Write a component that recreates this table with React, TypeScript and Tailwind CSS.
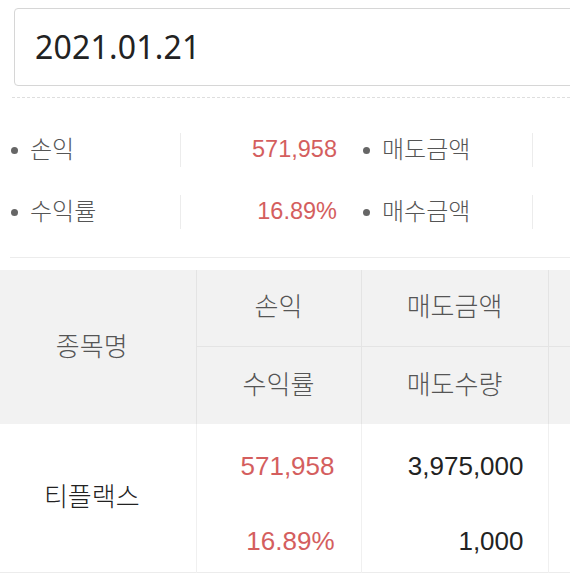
import React from "react"

const kr = "font-['Liberation_Sans','Noto_Sans_CJK_KR',sans-serif]"

interface SummaryItem {
  label: string
  value: string
  red?: boolean
}

const summaryRows: SummaryItem[][] = [
  [
    { label: "손익", value: "571,958", red: true },
    { label: "매도금액", value: "" },
  ],
  [
    { label: "수익률", value: "16.89%", red: true },
    { label: "매수금액", value: "" },
  ],
]

function SummaryCell({ item }: { item: SummaryItem }) {
  return (
    <div className="flex items-center w-[352px] shrink-0">
      <div className="flex items-center w-[180px] shrink-0 pl-[11px] text-[24px] font-light text-[#555]">
        <span className="w-[7px] h-[7px] rounded-full bg-[#666] mr-[12px]" />
        {item.label}
      </div>
      <div className="w-px h-[34px] bg-[#ececec]" />
      <div
        className={`flex-1 text-right pr-[15px] text-[23.5px] ${
          item.red ? "text-[#d45e5e]" : "text-[#222]"
        }`}
      >
        {item.value}
      </div>
    </div>
  )
}

export default function App() {
  return (
    <div className={`w-[570px] h-[575px] overflow-hidden bg-white ${kr}`}>
      <div className="w-[760px] pt-[8px]">
        <div className="ml-[14px] h-[78px] border border-[#d6d6d6] rounded-[4px] flex items-center pl-[20px]">
          <span className="font-['Noto_Sans',sans-serif] text-[32px] text-[#222] tracking-[0.2px]">
            2021.01.21
          </span>
        </div>

        <div className="ml-[12px] mt-[11px] border-t border-dashed border-[#dedede]" />

        <div className="pt-[21px] pb-[14px]">
          {summaryRows.map((row, i) => (
            <div key={i} className="flex h-[62px]">
              {row.map((item) => (
                <SummaryCell key={item.label} item={item} />
              ))}
            </div>
          ))}
        </div>

        <div className="ml-[10px] border-t border-[#ececec]" />

        <table className="mt-[12px] border-collapse table-fixed w-[760px]">
          <colgroup>
            <col className="w-[196px]" />
            <col className="w-[165px]" />
            <col className="w-[187px]" />
            <col />
          </colgroup>
          <thead className="bg-[#f2f2f2] text-[26px] text-[#555]">
            <tr className="h-[76px]">
              <th rowSpan={2} className="font-light pr-[12px] border-r border-[#e4e4e4]">
                종목명
              </th>
              <th className="font-light border-r border-b border-[#e4e4e4]">손익</th>
              <th className="font-light border-r border-b border-[#e4e4e4]">매도금액</th>
              <th className="font-light border-b border-[#e4e4e4]"></th>
            </tr>
            <tr className="h-[78px]">
              <th className="font-light border-r border-[#e4e4e4]">수익률</th>
              <th className="font-light border-r border-[#e4e4e4]">매도수량</th>
              <th className="font-light"></th>
            </tr>
          </thead>
          <tbody className="text-[26px] text-[#222]">
            <tr className="h-[148px] border-b border-[#ececec]">
              <td className="text-center pr-[12px] text-[26px] font-light text-[#222] border-r border-[#f0f0f0]">
                티플랙스
              </td>
              <td className="border-r border-[#f0f0f0] pr-[26px] text-right text-[#d45e5e]">
                <div className="flex flex-col gap-[36px] pt-[12px]">
                  <span>571,958</span>
                  <span>16.89%</span>
                </div>
              </td>
              <td className="border-r border-[#f0f0f0] pr-[24px] text-right">
                <div className="flex flex-col gap-[36px] pt-[12px]">
                  <span>3,975,000</span>
                  <span>1,000</span>
                </div>
              </td>
              <td></td>
            </tr>
          </tbody>
        </table>
      </div>
    </div>
  )
}
